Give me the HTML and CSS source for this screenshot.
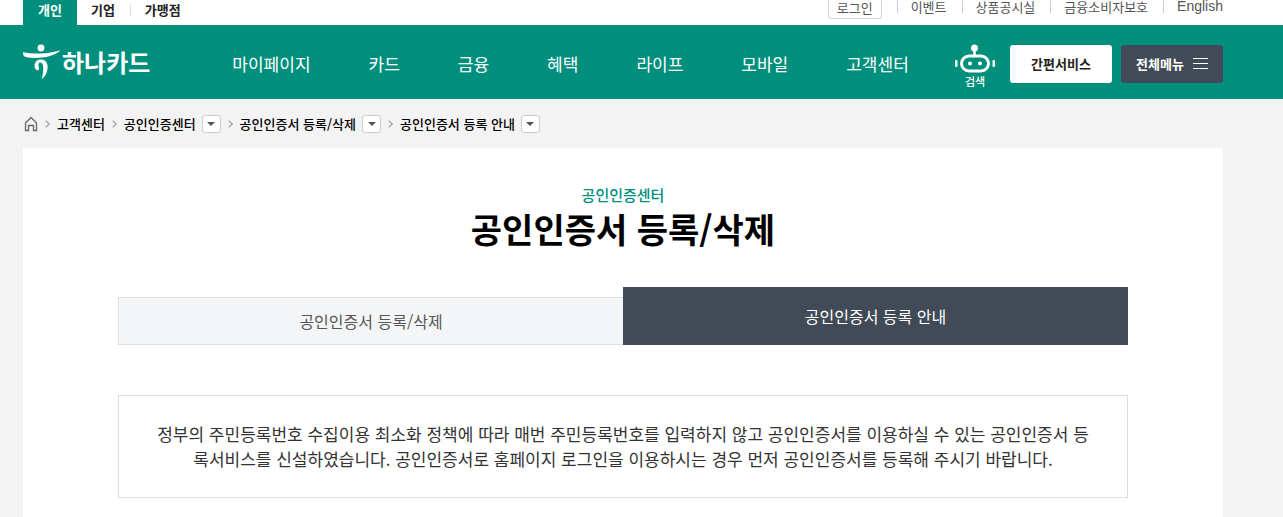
FILE: index.html
```html
<!DOCTYPE html>
<html lang="ko">
<head>
<meta charset="utf-8">
<title>공인인증서 등록 안내 - 하나카드</title>
<link rel="stylesheet" href="styles.css">
</head>
<body>
<div class="topbar wrap">
  <nav class="sites" aria-label="사이트">
    <a class="site site-on" href="#">개인</a>
    <a class="site" href="#">기업</a>
    <a class="site site-line" href="#">가맹점</a>
  </nav>
  <div class="utils">
    <button class="login" type="button">로그인</button>
    <a class="util" href="#">이벤트</a>
    <a class="util" href="#">상품공시실</a>
    <a class="util" href="#">금융소비자보호</a>
    <a class="util util-en" href="#" lang="en">English</a>
  </div>
</div>
<header class="header wrap">
  <a class="logo" href="#">
    <svg class="logo-mark" viewBox="0 0 38 36" width="38" height="36" aria-hidden="true">
      <circle cx="18" cy="4" r="3.4" fill="#fff"/>
      <path d="M0 8C5 9.200 10 9.600 17 9.500C25 9.400 31 8.200 37.600 6.200C34 9.600 28 12.300 21 13.300C13 14.400 4 14.200 1.500 12.600C.3 11.800 0 10 0 8Z" fill="#fff"/>
      <path d="M11.600 22.600C11.400 17.800 14.200 15.200 18.200 15.400C22.800 15.600 25 19 24.600 24C24.200 28.800 22.200 32.600 18.600 35.200C19.800 31 20.400 27 20.200 23.200C20 20 18.800 18.400 17.200 18.600C15.400 18.900 15 21.200 15.900 23.600C16.500 25.400 15.700 26.600 14.200 26.200C12.500 25.700 11.700 24.600 11.600 22.600Z" fill="#fff"/>
    </svg>
    <span class="logo-text">하나카드</span>
  </a>
  <nav class="menu" aria-label="주 메뉴">
    <a href="#">마이페이지</a>
    <a href="#">카드</a>
    <a href="#">금융</a>
    <a href="#">혜택</a>
    <a href="#">라이프</a>
    <a href="#">모바일</a>
    <a href="#">고객센터</a>
  </nav>
  <div class="tools">
    <a class="search" href="#">
      <svg viewBox="0 0 40 30" width="40" height="30" aria-hidden="true">
        <circle cx="19.500" cy="4" r="3.500" fill="#fff"/>
        <path d="M19.500 6V12" stroke="#fff" stroke-width="2.500"/>
        <rect x="6.500" y="12" width="27" height="15" rx="7.500" fill="none" stroke="#fff" stroke-width="3"/>
        <circle cx="15" cy="19.500" r="2" fill="#fff"/>
        <circle cx="25" cy="19.500" r="2" fill="#fff"/>
        <rect x="0" y="16" width="2.500" height="7" rx="1" fill="#fff"/>
        <rect x="37.500" y="16" width="2.500" height="7" rx="1" fill="#fff"/>
      </svg>
      <span>검색</span>
    </a>
    <button class="tool" type="button">간편서비스</button>
    <button class="tool tool-dark" type="button">전체메뉴
      <svg viewBox="0 0 15 11" width="15" height="11" aria-hidden="true"><path d="M0 .5H15M0 5.500H15M0 10.500H15" stroke="#fff"/></svg>
    </button>
  </div>
</header>
<nav class="crumbs wrap" aria-label="현재 위치">
  <a class="home" href="#" aria-label="홈">
    <svg viewBox="0 0 14 16" width="14" height="16" aria-hidden="true"><path d="M1.500 7L7 1.500L12.500 7V14.500H9.500V9.500H4.500V14.500H1.500Z" fill="none" stroke="#666" stroke-width="1.300"/></svg>
  </a>
  <svg class="arrow" viewBox="0 0 5 8" width="5" height="8" aria-hidden="true"><path d="M.7.700L4.200 4L.7 7.300" fill="none" stroke="#aaa" stroke-width="1.400"/></svg>
  <a href="#">고객센터</a>
  <svg class="arrow" viewBox="0 0 5 8" width="5" height="8" aria-hidden="true"><path d="M.7.700L4.200 4L.7 7.300" fill="none" stroke="#aaa" stroke-width="1.400"/></svg>
  <a href="#">공인인증센터</a>
  <button class="drop" type="button" aria-label="공인인증센터 메뉴 열기"></button>
  <svg class="arrow" viewBox="0 0 5 8" width="5" height="8" aria-hidden="true"><path d="M.7.700L4.200 4L.7 7.300" fill="none" stroke="#aaa" stroke-width="1.400"/></svg>
  <a href="#">공인인증서 등록/삭제</a>
  <button class="drop" type="button" aria-label="공인인증서 등록/삭제 메뉴 열기"></button>
  <svg class="arrow" viewBox="0 0 5 8" width="5" height="8" aria-hidden="true"><path d="M.7.700L4.200 4L.7 7.300" fill="none" stroke="#aaa" stroke-width="1.400"/></svg>
  <a href="#">공인인증서 등록 안내</a>
  <button class="drop" type="button" aria-label="공인인증서 등록 안내 메뉴 열기"></button>
</nav>
<div class="wrap">
  <main class="content">
    <p class="section">공인인증센터</p>
    <h1 class="title">공인인증서 등록/삭제</h1>
    <nav class="tabs" aria-label="탭">
      <a class="tab" href="#">공인인증서 등록/삭제</a>
      <a class="tab tab-on" href="#">공인인증서 등록 안내</a>
    </nav>
    <p class="notice">정부의 주민등록번호 수집이용 최소화 정책에 따라 매번 주민등록번호를 입력하지 않고 공인인증서를 이용하실 수 있는 공인인증서 등록서비스를 신설하였습니다. 공인인증서로 홈페이지 로그인을 이용하시는 경우 먼저 공인인증서를 등록해 주시기 바랍니다.</p>
  </main>
</div>
</body>
</html>
```

FILE: styles.css
```css
* { box-sizing: border-box; }
body {
  margin: 0;
  background: #f3f3f3;
  color: #000;
  font: 13px/20px "Noto Sans CJK KR", sans-serif;
}
a { color: inherit; text-decoration: none; }
button { font: inherit; cursor: pointer; }
svg { display: block; flex: none; }
.wrap { padding-left: 23px; padding-right: 60px; }

.topbar {
  display: flex;
  justify-content: space-between;
  align-items: flex-start;
  background: #fff;
}
.sites { display: flex; color: #222; font-weight: 700; }
.site { padding: 0 15px 5px 14px; }
.site-on { padding: 0 15px 5px; background: #008f7d; color: #fff; }
.site-line {
  padding-left: 15px;
  background: linear-gradient(#ddd, #ddd) 0 4px / 1px 12px no-repeat;
}
.utils { display: flex; align-items: flex-start; color: #555; line-height: 13px; }
.login {
  height: 19px;
  margin-right: 15px;
  padding: 0 8px 4px;
  border: 1px solid #d5d5d5;
  border-top: 0;
  border-radius: 0 0 3px 3px;
  background: #fff;
  color: #555;
}
.util { padding: 0 15px 0 13px; border-left: 1px solid #ccc; }
.util-en { padding-right: 0; font: 14px/13px "Liberation Sans", sans-serif; }

.header {
  display: flex;
  align-items: center;
  min-height: 74px;
  background: #008f7d;
  color: #fff;
}
.logo { display: flex; align-items: center; gap: 1px; }
.logo-text { font-size: 24px; font-weight: 700; line-height: 32px; }
.menu {
  display: flex;
  gap: 58px;
  margin-left: 82px;
  padding-top: 4px;
  font-size: 17px;
  font-weight: 400;
  line-height: 24px;
  white-space: nowrap;
}
.tools { display: flex; align-items: center; margin-left: auto; padding-top: 3px; }
.search {
  display: flex;
  flex-direction: column;
  align-items: center;
  margin-right: 15px;
  padding-top: 4px;
  font-size: 11px;
  font-weight: 500;
  line-height: 14px;
}
.tool {
  display: flex;
  align-items: center;
  justify-content: center;
  gap: 9px;
  width: 102px;
  height: 38px;
  padding: 0;
  border: 0;
  border-radius: 3px;
  background: #fff;
  color: #222;
  font-weight: 700;
  white-space: nowrap;
}
.tool-dark { margin-left: 9px; background: #414b57; color: #fff; }

.crumbs {
  display: flex;
  align-items: center;
  min-height: 49px;
  font-weight: 500;
}
.home { margin-left: 1px; }
.arrow { margin: 0 7px; }
.drop {
  display: flex;
  align-items: center;
  justify-content: center;
  width: 19px;
  height: 18px;
  margin-left: 6px;
  padding: 0;
  border: 1px solid #ccc;
  border-radius: 3px;
  background: #fff;
}
.drop::before {
  content: "";
  border: 4px solid transparent;
  border-top-color: #555;
  border-bottom: 0;
}

.content { padding: 37px 95px 19px; background: #fff; text-align: center; }
.section { margin: 0; color: #008f7d; font-size: 15px; font-weight: 500; line-height: 20px; }
.title { margin: 0; font-size: 34px; font-weight: 700; line-height: 48px; }
.tabs { display: flex; align-items: flex-end; margin-top: 34px; font-size: 16px; }
.tab {
  width: 50%;
  padding: 13px 0;
  border: 1px solid #dedfe0;
  border-right: 0;
  background: #f4f5f7;
  color: #555;
}
.tab-on { padding: 19px 0; border: 0; background: #414b57; color: #fff; }
.notice {
  margin: 50px 0 0;
  padding: 25px 36px 26px;
  border: 1px solid #dedede;
  color: #333;
  font-size: 17px;
  line-height: 25px;
}
```
